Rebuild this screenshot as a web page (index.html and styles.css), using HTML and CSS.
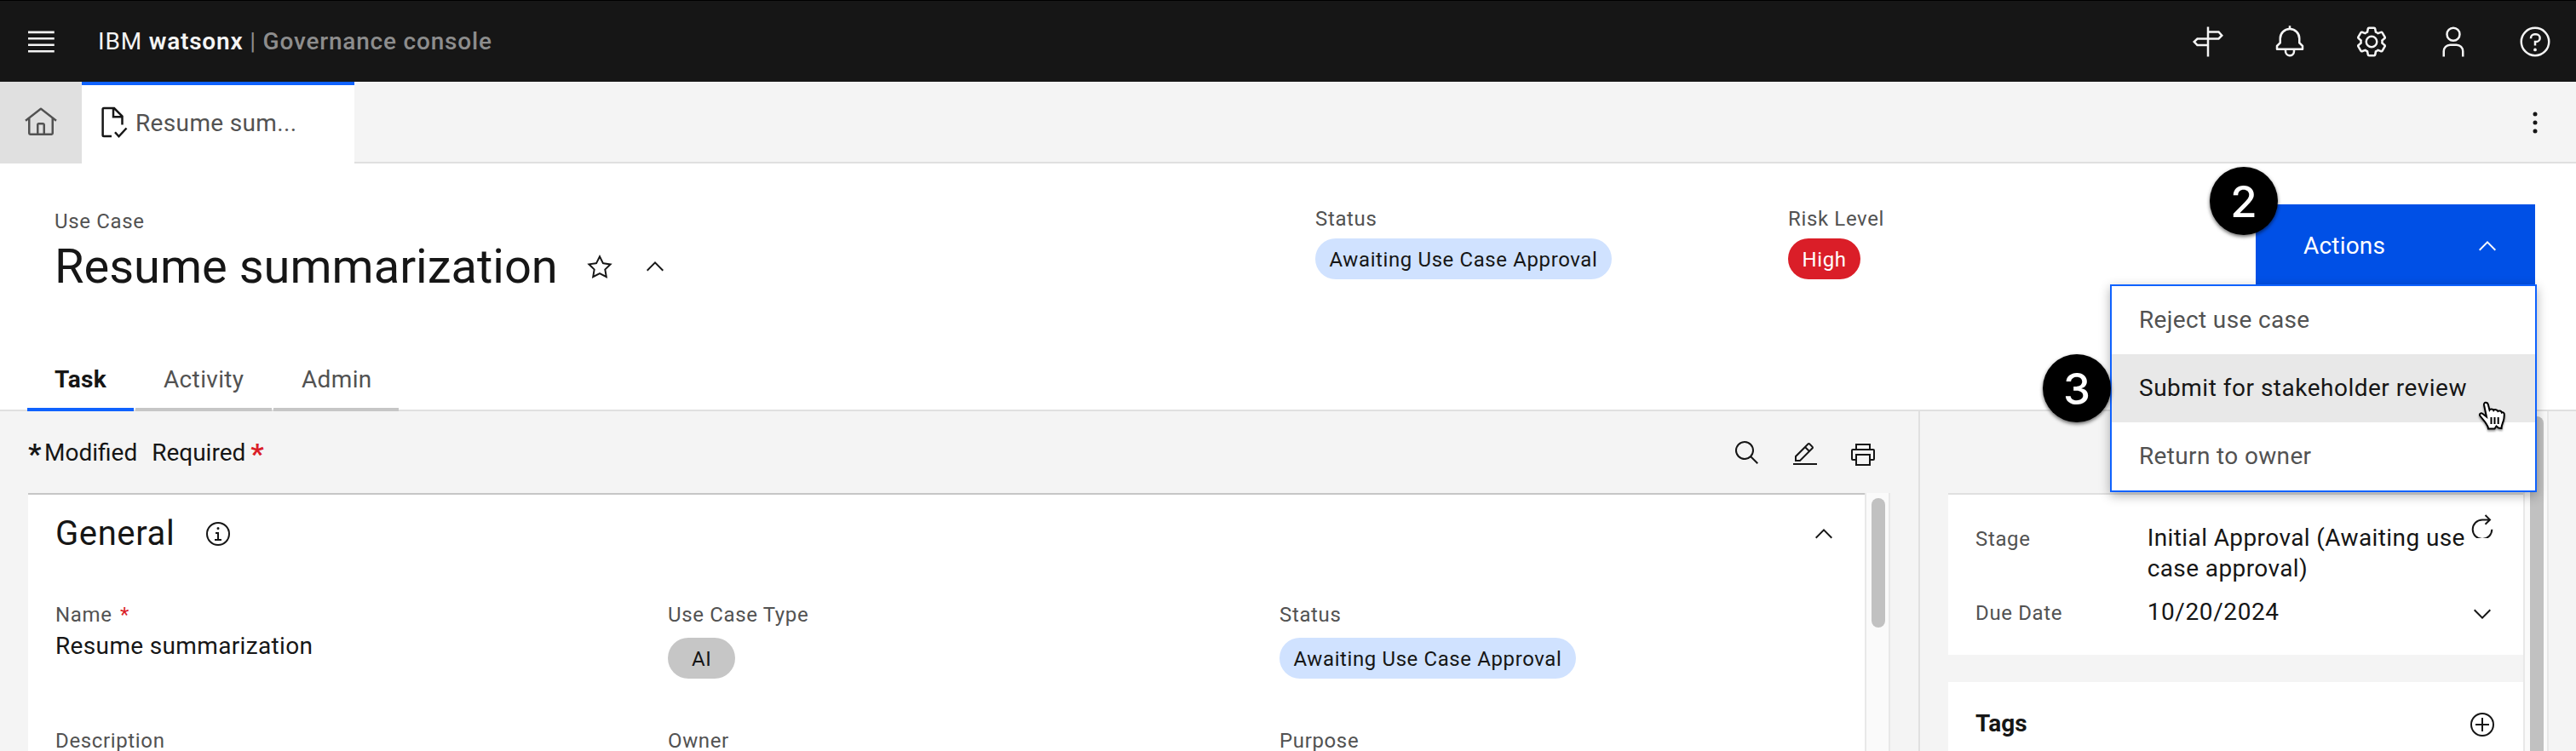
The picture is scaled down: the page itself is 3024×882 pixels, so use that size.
FILE: index.html
```html
<!DOCTYPE html>
<html lang="en">
<head>
<meta charset="utf-8">
<title>IBM watsonx | Governance console</title>
<link rel="stylesheet" href="styles.css">
</head>
<body>
<header class="masthead">
  <svg class="icon-lg" viewBox="0 0 32 32"><path d="M4 6H28.6V8.2H4zM4 12H28.6V14H4zM4 18H28.6V20H4zM4 24H28.6V26H4z"/></svg>
  <div class="brand">IBM <b>watsonx</b> <span class="brand-sub">| <span class="brand-product">Governance console</span></span></div>
  <nav class="masthead-tools">
    <svg class="icon-lg line" viewBox="0 0 32 32"><path d="M16 2V30M16 6.8H26L29 10.2L26 13.2H6L3 16L6 19.2H16"/></svg>
    <svg class="icon-lg" viewBox="0 0 32 32"><path d="M28.7071,19.293,26,16.5859V13a10.0136,10.0136,0,0,0-9-9.9492V1H15V3.0508A10.0136,10.0136,0,0,0,6,13v3.5859L3.2929,19.293A1,1,0,0,0,3,20v3a1,1,0,0,0,1,1h7v.7768a5.152,5.152,0,0,0,4.5,5.1987A5.0057,5.0057,0,0,0,21,25V24h7a1,1,0,0,0,1-1V20A1,1,0,0,0,28.7071,19.293ZM19,25a3,3,0,0,1-6,0V24h6Zm8-3H5V20.4141L7.707,17.707A1,1,0,0,0,8,17V13a8,8,0,0,1,16,0v4a1,1,0,0,0,.293.707L27,20.4141Z"/></svg>
    <svg class="icon-lg" viewBox="0 0 32 32"><path d="M27,16.76c0-.25,0-.5,0-.76s0-.51,0-.77l1.92-1.68A2,2,0,0,0,29.3,11L26.94,7a2,2,0,0,0-1.73-1,2,2,0,0,0-.64.1l-2.43.82a11.35,11.35,0,0,0-1.31-.75l-.51-2.52a2,2,0,0,0-2-1.61H13.64a2,2,0,0,0-2,1.61l-.51,2.52a11.48,11.48,0,0,0-1.32.75L7.43,6.06A2,2,0,0,0,6.79,6,2,2,0,0,0,5.06,7L2.7,11a2,2,0,0,0,.41,2.51L5,15.24c0,.25,0,.5,0,.76s0,.51,0,.77L3.11,18.45A2,2,0,0,0,2.7,21L5.06,25a2,2,0,0,0,1.73,1,2,2,0,0,0,.64-.1l2.43-.82a11.35,11.35,0,0,0,1.31.75l.51,2.52a2,2,0,0,0,2,1.61h4.72a2,2,0,0,0,2-1.61l.51-2.52a11.48,11.48,0,0,0,1.32-.75l2.42.82a2,2,0,0,0,.64.1,2,2,0,0,0,1.73-1L29.3,21a2,2,0,0,0-.41-2.51ZM25.21,24l-3.43-1.16a8.86,8.86,0,0,1-2.71,1.57L18.36,28H13.64l-.71-3.55a9.36,9.36,0,0,1-2.7-1.57L6.79,24,4.43,20l2.72-2.4a8.9,8.9,0,0,1,0-3.13L4.43,12,6.79,8l3.43,1.16a8.86,8.86,0,0,1,2.71-1.57L13.64,4h4.72l.71,3.55a9.36,9.36,0,0,1,2.7,1.57L25.21,8,27.57,12l-2.72,2.4a8.9,8.9,0,0,1,0,3.13L27.57,20ZM16,22a6,6,0,1,1,6-6A5.94,5.94,0,0,1,16,22Zm0-10a3.91,3.91,0,0,0-4,4,3.91,3.91,0,0,0,4,4,3.91,3.91,0,0,0,4-4A3.91,3.91,0,0,0,16,12Z"/></svg>
    <svg class="icon-lg" viewBox="0 0 32 32"><path d="M16,4a5,5,0,1,1-5,5,5,5,0,0,1,5-5m0-2a7,7,0,1,0,7,7A7,7,0,0,0,16,2ZM26,30H24V25a5,5,0,0,0-5-5H13a5,5,0,0,0-5,5v5H6V25a7,7,0,0,1,7-7h6a7,7,0,0,1,7,7Z"/></svg>
    <svg class="icon-lg" viewBox="0 0 32 32"><path d="M16,2A14,14,0,1,0,30,16,14,14,0,0,0,16,2Zm0,26A12,12,0,1,1,28,16,12,12,0,0,1,16,28ZM17,8H15.5A4.49,4.49,0,0,0,11,12.5V13h2v-.5A2.5,2.5,0,0,1,15.5,10H17a2.5,2.5,0,0,1,0,5H15v4.5h2V17a4.5,4.5,0,0,0,0-9Z"/><circle cx="16" cy="23.5" r="1.5"/></svg>
  </nav>
</header>

<div class="workspace-tabs">
  <div class="home-tab"><svg class="icon-lg" viewBox="0 0 32 32"><path d="M16.6123,2.2138a1.01,1.01,0,0,0-1.2427,0L1,13.4194l1.2427,1.5717L4,13.6209V26a2.0041,2.0041,0,0,0,2,2H26a2.0037,2.0037,0,0,0,2-2V13.63L29.7573,15,31,13.4282ZM18,26H14V18h4Zm2,0V18a2.0023,2.0023,0,0,0-2-2H14a2.002,2.002,0,0,0-2,2v8H6V12.0615l10-7.79,10,7.8V26Z"/></svg></div>
  <div class="open-tab">
    <svg class="icon-lg line doc-icon" viewBox="0 0 32 32"><path d="M13.600 28.800H6.300a1 1 0 0 1-1-1V3.400a1 1 0 0 1 1-1H16L23.600 10V18M15.200 2.400V10.600H23.600M16.800 25L20.400 29L27.600 21.200"/></svg>
    <span>Resume sum...</span>
  </div>
  <div class="tab-rest"><svg class="icon-lg" viewBox="0 0 32 32"><circle cx="16" cy="8" r="2"/><circle cx="16" cy="16" r="2"/><circle cx="16" cy="24" r="2"/></svg></div>
</div>

<section class="hero">
  <div class="hero-row">
    <div class="hero-title">
      <div class="label">Use Case</div>
      <div class="title-line">
        <h1>Resume summarization</h1>
        <svg class="icon star" viewBox="0 0 32 32"><path d="M16,6.52l2.76,5.58.46,1,1,.15,6.16.89L22,18.44l-.75.73.18,1,1.05,6.13-5.51-2.89L16,23l-.93.49L9.51,26.3l1-6.13.18-1L10,18.44,5.58,14.09l6.16-.89,1-.15.46-1L16,6.52M16,2l-4.55,9.22L1.28,12.69l7.36,7.18L6.9,30,16,25.22,25.1,30,23.36,19.87l7.36-7.17L20.55,11.22Z"/></svg>
        <svg class="icon" viewBox="0 0 16 16"><path d="M8 5L13 10 12.3 10.7 8 6.4 3.7 10.7 3 10z"/></svg>
      </div>
    </div>
    <div class="hero-status">
      <div class="label">Status</div>
      <span class="pill pill-blue">Awaiting Use Case Approval</span>
    </div>
    <div class="hero-risk">
      <div class="label">Risk Level</div>
      <span class="pill pill-red">High</span>
    </div>
    <div class="actions">
      <button class="actions-button"><span>Actions</span><svg class="icon" viewBox="0 0 16 16"><path d="M8 5L13 10 12.3 10.7 8 6.4 3.7 10.7 3 10z"/></svg></button>
      <span class="callout callout-two">2</span>
      <ul class="menu">
        <li>Reject use case</li>
        <li class="menu-active">Submit for stakeholder review</li>
        <li>Return to owner</li>
      </ul>
      <span class="callout callout-three">3</span>
      <svg class="pointer" viewBox="0 0 36 36"><path d="M8 4.500C7.500 1 12 .8 12.800 4L14.500 10.500C15.500 9 18.500 9.200 19.300 11C20.500 9.500 23.500 10 24.300 12C25.800 10.800 28.400 11.500 28.800 13.500C30.500 12.800 32 14 31.800 16L31.500 20C31 25 28.500 27 28.500 32L25 31.500L22.500 29.500L20.500 32.500H13C13 29 10.500 27 9.500 25L3.500 17.500C1.800 15 4.500 13.500 6.500 15L11 18.500Z"/><path d="M16.500 19V27M20.500 19V27M24.700 19V27"/></svg>
    </div>
  </div>
  <nav class="view-tabs">
    <a class="view-tab view-task">Task</a>
    <a class="view-tab view-activity">Activity</a>
    <a class="view-tab view-admin">Admin</a>
  </nav>
</section>

<main class="content">
  <section class="details">
    <div class="toolbar">
      <div class="legend"><b class="mark">*</b><span>Modified</span><span class="legend-required">Required</span><b class="mark mark-red">*</b></div>
      <div class="tools">
        <svg class="icon search" viewBox="0 0 32 32"><path d="M29,27.5859l-7.5521-7.5521a11.0177,11.0177,0,1,0-1.4141,1.4141L27.5859,29ZM4,13a9,9,0,1,1,9,9A9.01,9.01,0,0,1,4,13Z"/></svg>
        <svg class="icon" viewBox="0 0 32 32"><path d="M2 26H30V28H2zM25.4 9c.8-.8.8-2 0-2.8L21.8 2.6c-.8-.8-2-.8-2.800 0l-15 15V24h6.400L25.400 9zM20.400 4L24 7.600l-3 3L17.400 7 20.400 4zM6 22v-3.600l10-10 3.600 3.600-10 10H6z"/></svg>
        <svg class="icon" viewBox="0 0 32 32"><path d="M28,9H25V3H7V9H4a2,2,0,0,0-2,2V21a2,2,0,0,0,2,2H7v6H25V23h3a2,2,0,0,0,2-2V11A2,2,0,0,0,28,9ZM9,5H23V9H9ZM23,27H9V17H23Zm5-6H25V15H7v6H4V11H28Z"/></svg>
      </div>
    </div>
    <div class="scroll-area">
      <div class="general">
        <div class="general-head">
          <h2>General</h2>
          <svg class="icon" viewBox="0 0 32 32"><path d="M17 22V14H13v2h2v6H12v2h8V22zM16 8a1.500 1.500 0 1 0 1.500 1.500A1.500 1.500 0 0 0 16 8zM16 30A14 14 0 1 1 30 16 14 14 0 0 1 16 30zM16 4A12 12 0 1 0 28 16 12 12 0 0 0 16 4z"/></svg>
          <svg class="icon collapse" viewBox="0 0 16 16"><path d="M8 5L13 10 12.3 10.7 8 6.4 3.7 10.7 3 10z"/></svg>
        </div>
        <div class="fields">
          <div class="field"><div class="label">Name <span class="req">*</span></div><div class="value">Resume summarization</div></div>
          <div class="field"><div class="label">Use Case Type</div><span class="pill pill-gray">AI</span></div>
          <div class="field"><div class="label">Status</div><span class="pill pill-blue">Awaiting Use Case Approval</span></div>
          <div class="label">Description</div>
          <div class="label">Owner</div>
          <div class="label">Purpose</div>
        </div>
      </div>
      <div class="track"><div class="thumb"></div></div>
    </div>
  </section>
  <aside class="side">
    <div class="side-cards">
      <div class="stage-card">
        <div class="pair"><div class="label">Stage</div><div class="stage-value">Initial Approval (Awaiting use<br>case approval)</div>
          <svg class="icon line restart" viewBox="0 0 32 32"><path d="M24.500 10.400H16A11.300 11.300 0 1 0 27.300 21.700M19.500 5L25 10.400L19.500 15.800"/></svg></div>
        <div class="pair"><div class="label">Due Date</div><div class="date-value">10/20/2024</div>
          <svg class="icon expand" viewBox="0 0 16 16"><path d="M8 11L3 6 3.700 5.300 8 9.600 12.300 5.300 13 6z"/></svg></div>
      </div>
      <div class="tags-card"><b class="tags-title">Tags</b>
        <svg class="icon" viewBox="0 0 32 32"><path d="M16,4A12,12,0,1,1,4,16,12,12,0,0,1,16,4m0-2A14,14,0,1,0,30,16,14,14,0,0,0,16,2ZM24 15H17V8H15V15H8V17H15V24H17V17H24Z"/></svg></div>
    </div>
    <div class="track"><div class="thumb side-thumb"></div></div>
  </aside>
</main>
</body>
</html>
```
FILE: styles.css
```css
* { box-sizing: border-box; }
body {
  margin: 0;
  width: 3024px;
  height: 882px;
  overflow: hidden;
  background: #fff;
  color: #161616;
  font-family: Roboto, "Noto Sans", sans-serif;
  font-size: 28px;
}
svg { display: block; flex: none; fill: currentColor; }
h1, h2, ul { margin: 0; padding: 0; font-weight: 400; }
.icon { width: 32px; height: 32px; }
.icon-lg { width: 40px; height: 40px; }
.line { fill: none; stroke: currentColor; stroke-width: 2; }
.label { color: #525252; font-size: 24px; line-height: 32px; letter-spacing: .64px; white-space: nowrap; }

.masthead {
  display: flex;
  align-items: center;
  height: 96px;
  padding: 0 28px;
  border-top: 1px solid #000;
  background: #161616;
  color: #f4f4f4;
}
.brand { margin-left: 47px; letter-spacing: .8px; white-space: nowrap; }
.brand b { font-weight: 600; }
.brand-sub { color: #8d8d8d; }
.brand-product { font-weight: 500; }
.masthead-tools { display: flex; gap: 56px; margin-left: auto; }

.workspace-tabs { display: flex; height: 96px; }
.home-tab { display: flex; align-items: center; justify-content: center; width: 96px; background: #e0e0e0; color: #525252; }
.open-tab { display: flex; align-items: center; width: 320px; padding: 0 0 4px 18px; border-top: 4px solid #0f62fe; color: #525252; letter-spacing: .35px; }
.open-tab span { margin-left: 5px; }
.doc-icon { color: #161616; }
.tab-rest { display: flex; flex: 1; align-items: center; justify-content: flex-end; padding: 2px 28px 0 0; border-bottom: 2px solid #e0e0e0; background: #f4f4f4; }

.hero { display: flex; flex-direction: column; height: 291px; border-bottom: 2px solid #e0e0e0; }
.hero-row { display: flex; flex: 1; padding: 48px 48px 0 64px; }
.hero-title { width: 1480px; padding-top: 4px; }
.title-line { display: flex; align-items: center; height: 64px; margin-top: 5px; }
h1 { width: 624px; font-size: 56px; line-height: 64px; white-space: nowrap; }
.star { margin-right: 33px; }
.hero-status { width: 555px; padding-top: 1px; }
.hero-risk { width: 549px; padding-top: 1px; }
.hero .pill { margin-top: 7px; }
.pill { display: block; width: fit-content; height: 48px; padding: 0 16.5px; border-radius: 24px; font-size: 24px; line-height: 50px; letter-spacing: .6px; white-space: nowrap; }
.pill-blue { background: #d0e2ff; }
.pill-red { background: #da1e28; color: #fff; }
.pill-gray { padding: 0 28px; background: #c6c6c6; }

.actions { position: relative; width: 328px; }
.actions-button { display: flex; align-items: center; justify-content: space-between; width: 328px; height: 97px; padding: 0 40px 0 56px; border: 0; background: #0050e6; color: #fff; font: inherit; letter-spacing: .2px; }
.menu {
  position: absolute;
  z-index: 1;
  top: 94px;
  right: -2px;
  width: 501px;
  height: 244px;
  border: 2px solid #0f62fe;
  background: #fff;
  box-shadow: 0 4px 12px rgba(0, 0, 0, .3);
  color: #525252;
  letter-spacing: .35px;
  list-style: none;
}
.menu li { height: 80px; padding-left: 32px; line-height: 80px; white-space: nowrap; }
.menu .menu-active { background: #e8e8e8; color: #161616; letter-spacing: .5px; }
.callout {
  position: absolute;
  z-index: 2;
  width: 80px;
  height: 80px;
  border-radius: 50%;
  background: #000;
  box-shadow: 0 2px 4px rgba(0, 0, 0, .6);
  color: #fff;
  font: 500 51px/81px Inter, sans-serif;
  text-align: center;
}
.callout-two { top: -44px; left: -54px; }
.callout-three { top: 176px; left: -250px; }
.pointer { position: absolute; z-index: 3; top: 231px; left: 260px; width: 36px; height: 36px; fill: #fff; stroke: #000; stroke-width: 2; filter: drop-shadow(0 2px 1px rgba(0, 0, 0, .4)); }

.view-tabs { display: flex; gap: 2px; height: 64px; margin: 0 0 -2px 32px; }
.view-tab { padding-left: 33px; border-bottom: 4px solid #c6c6c6; color: #525252; line-height: 53px; letter-spacing: .35px; }
.view-task { width: 125px; padding-left: 32px; border-color: #0f62fe; color: #161616; font-weight: 700; }
.view-activity { width: 160px; }
.view-admin { width: 147px; }

.content { display: flex; height: 399px; overflow: hidden; background: #f4f4f4; }
.details { width: 2254px; padding: 0 33px; border-right: 2px solid #e0e0e0; }
.toolbar { display: flex; align-items: center; height: 96px; }
.legend { display: flex; padding-top: 4px; }
.mark { width: 19px; font-size: 34px; line-height: 36px; }
.mark-red { margin-left: 6px; color: #da1e28; }
.legend-required { margin-left: 17px; }
.tools { display: flex; gap: 36px; margin: 5px 16px 0 auto; }
.search { margin-top: -2px; }
.scroll-area { display: flex; height: 303px; }
.general { width: 2156px; border-top: 2px solid #c6c6c6; background: #fff; }
.general-head { display: flex; align-items: center; padding: 22px 32px 0 32px; }
h2 { width: 175px; font-size: 40px; line-height: 48px; letter-spacing: .6px; }
.collapse { margin-left: auto; }
.fields { display: grid; grid-template-columns: 719px 718px 1fr; padding: 55px 0 0 32px; }
.field { height: 148px; }
.fields .pill { margin-top: 11px; }
.value { line-height: 42px; letter-spacing: .35px; }
.req { margin-left: 3px; color: #da1e28; }
.track { width: 30px; border: 2px solid #e8e8e8; border-width: 0 2px; background: #fafafa; }
.thumb { width: 16px; height: 152px; margin: 6px 0 0 6px; border-radius: 8px; background: #c1c1c1; }

.side { display: flex; flex: 1; padding-left: 33px; }
.side-cards { display: flex; flex-direction: column; gap: 32px; width: 675px; padding-top: 96px; }
.stage-card { height: 190px; border-top: 2px solid #e0e0e0; background: #fff; }
.tags-card { display: flex; flex: 1; justify-content: space-between; padding: 34px 32px 0 32px; background: #fff; }
.pair { display: flex; padding: 33px 32px 0 32px; }
.pair + .pair { padding-top: 15px; }
.pair .label { width: 202px; padding-top: 3px; }
.pair .expand { margin: 4px 0 0 auto; }
.pair .restart { margin: -14px 0 0 auto; }
.stage-value, .date-value { width: 378px; line-height: 36px; letter-spacing: .4px; white-space: nowrap; }
.date-value { letter-spacing: .6px; }
.tags-title { line-height: 30px; }
.side-thumb { height: 393px; border-radius: 8px 8px 0 0; }
```
